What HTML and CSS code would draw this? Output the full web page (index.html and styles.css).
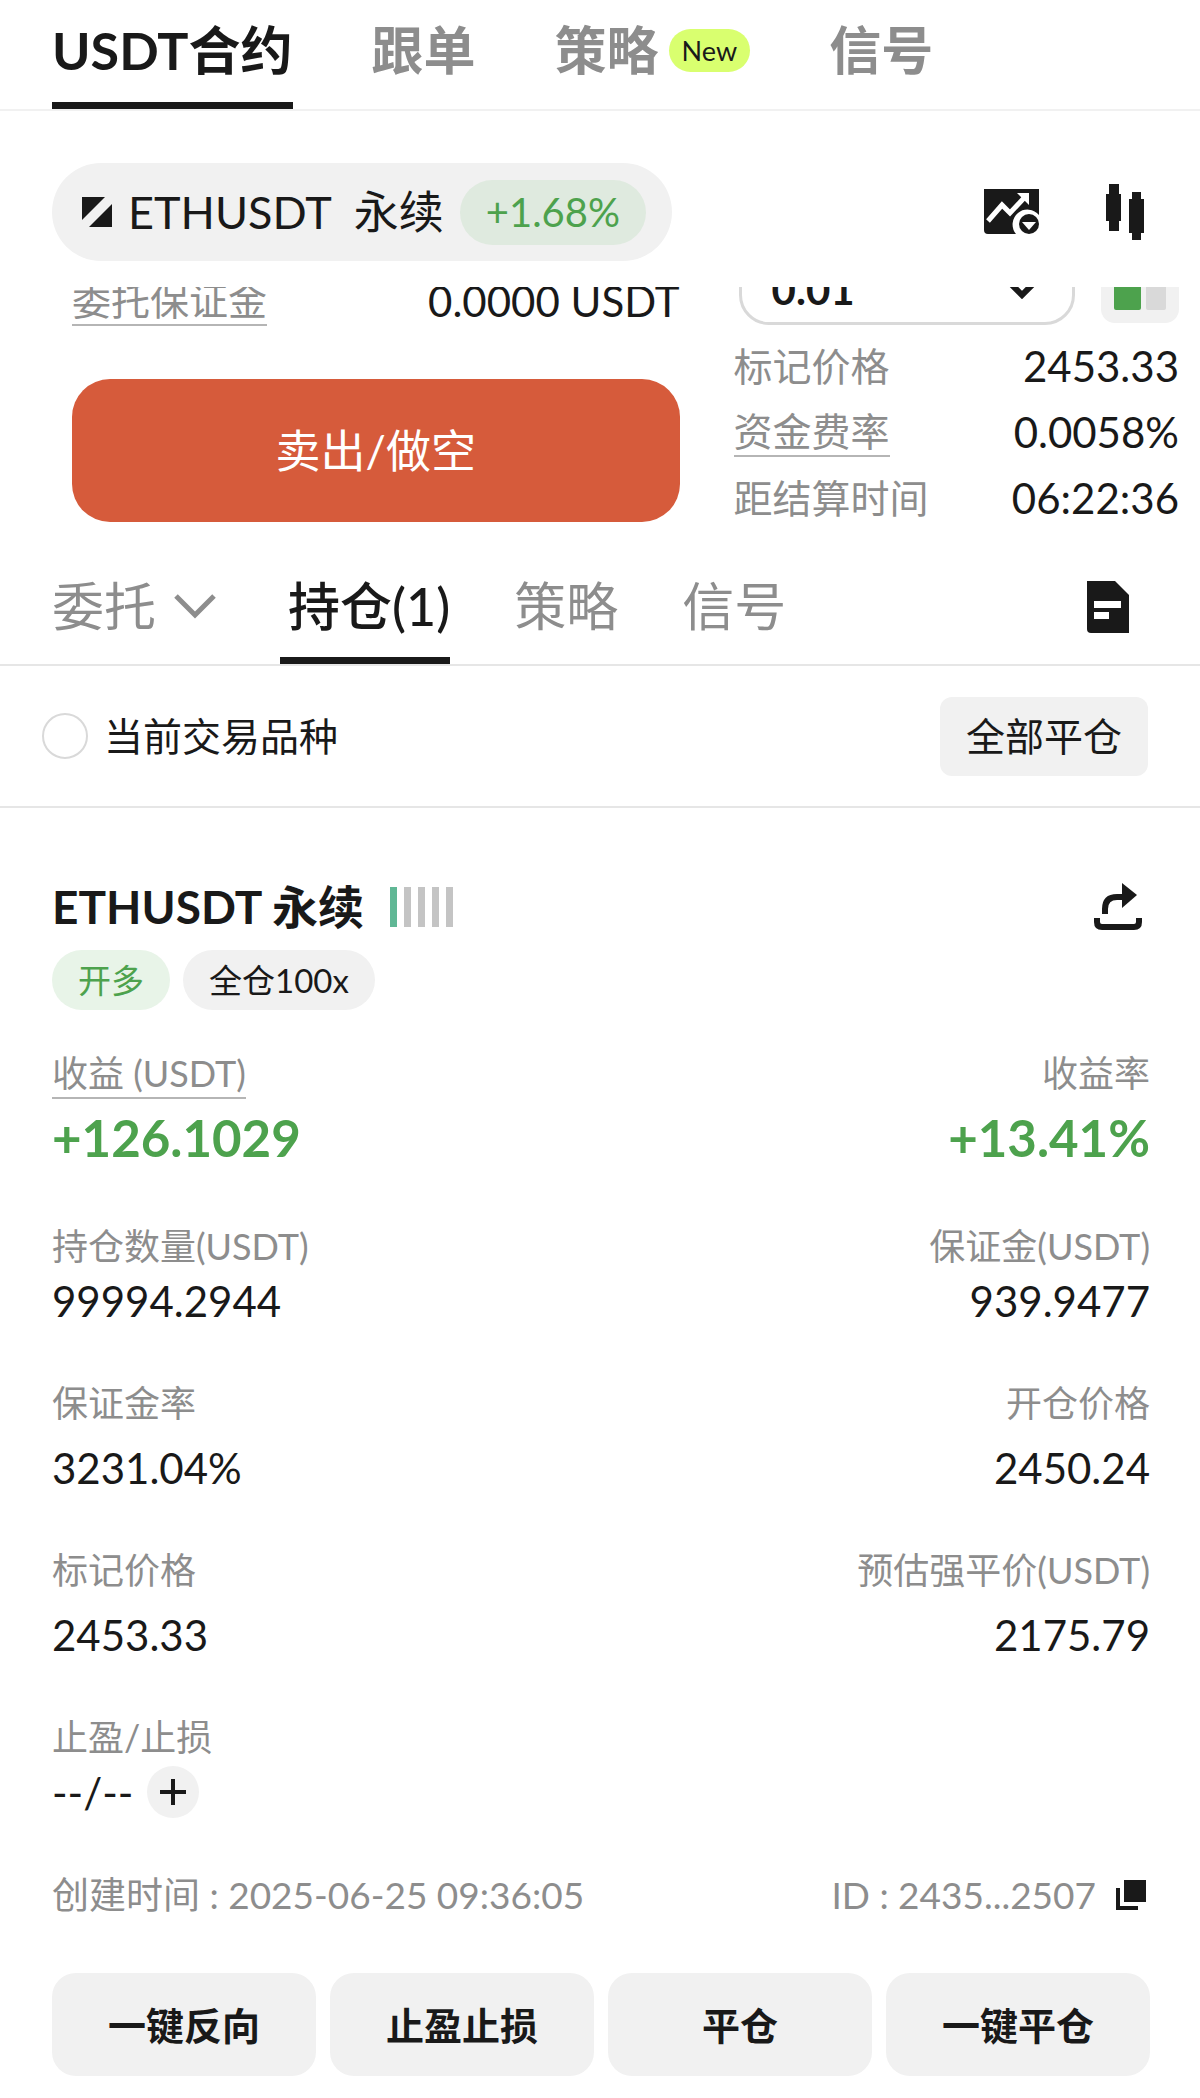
FILE: index.html
```html
<!DOCTYPE html>
<html lang="zh-CN">
<head>
    <meta charset="UTF-8">
    <meta name="viewport" content="width=device-width, initial-scale=1.0">
    <title>USDT合约</title>
    <link rel="stylesheet" href="styles.css">
</head>
<body>
    <nav class="top-tabs">
        <a href="#" class="active">USDT合约</a>
        <a href="#">跟单</a>
        <a href="#">策略<span class="new-tag">New</span></a>
        <a href="#">信号</a>
    </nav>

    <header class="symbol-bar">
        <button class="symbol">
            <svg width="30" height="30" viewBox="0 0 30 30"><path d="M0 0h23L0 23zM30 7v23H7z"/></svg>
            <span class="symbol-name">ETHUSDT</span>
            <span>永续</span>
            <span class="change">+1.68%</span>
        </button>
        <div class="tools">
            <button class="icon-button" aria-label="图表">
                <svg width="56" height="46" viewBox="0 0 56 46">
                    <path d="M0 0h55v26a14 14 0 0 0-23 19H4q-4 0-4-4z"/>
                    <path d="M4 32l14-16 8 8L40 9" fill="none" stroke="#fff" stroke-width="5"/>
                    <path d="M33 4h12v12z" fill="#fff"/>
                    <circle cx="45" cy="35" r="10"/>
                    <path d="M38 33h14l-7 8z" fill="#fff"/>
                </svg>
            </button>
            <button class="icon-button" aria-label="K线">
                <svg width="38" height="56" viewBox="0 0 38 56"><path d="M3 0h10v10h2v27h-2v10H3V37H0V10h3zM26 8h9v7h3v34h-3v7h-9v-7h-3V15h3z"/></svg>
            </button>
        </div>
    </header>

    <section class="trade">
        <div class="order">
            <div class="pair deposit">
                <span class="label hint">委托保证金</span>
                <span>0.0000 USDT</span>
            </div>
            <button class="sell">卖出/做空</button>
        </div>
        <div class="market">
            <div class="depth">
                <div class="select-box">
                    <select aria-label="深度"><option>0.01</option></select>
                    <svg width="28" height="26" viewBox="0 0 28 26"><path d="M2 10l12 12 12-12" fill="none" stroke="#191919" stroke-width="6"/></svg>
                </div>
                <button class="book-mode" aria-label="盘口"><i></i><i></i></button>
            </div>
            <div class="pair"><span class="label">标记价格</span><span>2453.33</span></div>
            <div class="pair"><span class="label hint">资金费率</span><span>0.0058%</span></div>
            <div class="pair"><span class="label">距结算时间</span><span>06:22:36</span></div>
        </div>
    </section>

    <nav class="position-tabs">
        <a href="#">委托
            <svg width="42" height="26" viewBox="0 0 42 26"><path d="M2 3l19 19L40 3" fill="none" stroke="#8d8d8d" stroke-width="5"/></svg>
        </a>
        <a href="#" class="active">持仓(1)</a>
        <a href="#">策略</a>
        <a href="#">信号</a>
        <button class="icon-button history" aria-label="历史">
            <svg width="42" height="52" viewBox="0 0 42 52">
                <path d="M0 0h28l14 14v38H4q-4 0-4-4z"/>
                <path d="M7 20h27v7H7zM7 31h15v7H7z" fill="#fff"/>
            </svg>
        </button>
    </nav>

    <div class="filter">
        <label><input type="checkbox">当前交易品种</label>
        <button>全部平仓</button>
    </div>

    <main class="position">
        <div class="position-head">
            <h2>ETHUSDT 永续</h2>
            <div class="risk"><i class="on"></i><i></i><i></i><i></i><i></i></div>
            <button class="icon-button share" aria-label="分享">
                <svg width="48" height="48" viewBox="0 0 48 48">
                    <path d="M11 31v-5q0-12 12-12h7M3 35v4q0 5 5 5h32q5 0 5-5v-4" fill="none" stroke="#191919" stroke-width="6"/>
                    <path d="M28 0l15 12-15 13z"/>
                </svg>
            </button>
        </div>
        <div class="badges">
            <span class="long">开多</span>
            <span>全仓100x</span>
        </div>

        <dl class="metrics">
            <div class="profit">
                <dt><span class="hint">收益 (USDT)</span></dt>
                <dd>+126.1029</dd>
            </div>
            <div class="profit">
                <dt>收益率</dt>
                <dd>+13.41%</dd>
            </div>
            <div class="tight">
                <dt>持仓数量(USDT)</dt>
                <dd>99994.2944</dd>
            </div>
            <div class="tight">
                <dt>保证金(USDT)</dt>
                <dd>939.9477</dd>
            </div>
            <div>
                <dt>保证金率</dt>
                <dd>3231.04%</dd>
            </div>
            <div>
                <dt>开仓价格</dt>
                <dd>2450.24</dd>
            </div>
            <div>
                <dt>标记价格</dt>
                <dd>2453.33</dd>
            </div>
            <div>
                <dt>预估强平价(USDT)</dt>
                <dd>2175.79</dd>
            </div>
            <div class="tight">
                <dt>止盈/止损</dt>
                <dd class="tpsl">--/--
                    <button aria-label="添加"><svg width="26" height="26" viewBox="0 0 26 26"><path d="M13 0v26M0 13h26" fill="none" stroke="#191919" stroke-width="4"/></svg></button>
                </dd>
            </div>
        </dl>

        <div class="meta">
            <span>创建时间 : 2025-06-25 09:36:05</span>
            <span class="order-id">ID : 2435...2507
                <button class="icon-button" aria-label="复制">
                    <svg width="30" height="30" viewBox="0 0 30 30"><path d="M8 0h22v22H8zM0 8h4v18h18v4H0z"/></svg>
                </button>
            </span>
        </div>

        <div class="actions">
            <button>一键反向</button>
            <button>止盈止损</button>
            <button>平仓</button>
            <button>一键平仓</button>
        </div>
    </main>
</body>
</html>
```

FILE: styles.css
```css
* {
    box-sizing: border-box;
}

body {
    margin: 0;
    background-color: #fff;
    color: #191919;
    font-family: Lato, 'Noto Sans CJK SC', sans-serif;
    font-size: 42px;
    line-height: 48px;
}

a {
    color: #8d8d8d;
    text-decoration: none;
}

button,
select {
    border: none;
    padding: 0;
    background: none;
    color: inherit;
    font: inherit;
    cursor: pointer;
}

svg {
    display: block;
    fill: #191919;
}

.icon-button {
    display: flex;
}

/* top navigation */
.top-tabs {
    display: flex;
    gap: 79px;
    height: 111px;
    padding: 0 52px;
    border-bottom: 2px solid #f1f1f1;
    font-size: 52px;
    font-weight: 700;
}

.top-tabs a {
    display: flex;
    align-items: center;
    gap: 10px;
    padding-bottom: 2px;
    border-bottom: 7px solid transparent;
}

.top-tabs .active,
.position-tabs .active {
    color: #191919;
    border-color: #191919;
}

.new-tag {
    padding: 0 13px;
    border-radius: 22px;
    background-color: #d9ff6f;
    color: #191919;
    font-size: 27px;
    font-weight: 400;
    line-height: 43px;
}

/* symbol bar */
.symbol-bar {
    display: flex;
    justify-content: space-between;
    align-items: center;
    padding: 52px 56px 26px 52px;
}

.symbol {
    display: flex;
    align-items: center;
    gap: 16px;
    height: 98px;
    padding: 0 26px 0 30px;
    border-radius: 49px;
    background-color: #f1f1f1;
    font-size: 45px;
}

.symbol-name {
    margin-right: 6px;
}

.change {
    padding: 0 26px;
    border-radius: 33px;
    background-color: #dfeadf;
    color: #4da24d;
    font-size: 40px;
    line-height: 65px;
}

.tools {
    display: flex;
    align-items: center;
    gap: 66px;
}

/* order form, scrolled under the symbol bar */
.trade {
    display: grid;
    grid-template-columns: 607fr 445fr;
    align-items: end;
    gap: 54px;
    overflow: hidden;
    padding: 0 21px 0 72px;
}

.order,
.market {
    margin-top: -40px;
}

.order {
    padding-bottom: 9px;
}

.pair {
    display: flex;
    justify-content: space-between;
    align-items: center;
    height: 66px;
}

.label {
    color: #8d8d8d;
    font-size: 39px;
}

.hint {
    display: inline-block;
    border-bottom: 2px solid #b5b5b5;
}

.deposit {
    margin-bottom: 45px;
}

.sell {
    width: 100%;
    height: 143px;
    border-radius: 38px;
    background-color: #d65b3b;
    color: #fff;
    font-size: 45px;
}

.depth {
    display: flex;
    align-items: center;
    gap: 26px;
    margin-bottom: 8px;
}

.select-box {
    display: flex;
    align-items: center;
    flex: 1;
    margin-left: 5px;
    padding-right: 36px;
    height: 78px;
    border: 3px solid #d9d9d9;
    border-radius: 30px;
}

.select-box select {
    flex: 1;
    height: 72px;
    padding-top: 6px;
    padding-left: 30px;
    appearance: none;
    font-size: 42px;
    font-weight: 700;
}

.book-mode {
    display: flex;
    align-items: center;
    gap: 5px;
    width: 78px;
    height: 74px;
    padding: 0 13px;
    border-radius: 14px;
    background-color: #f1f1f1;
}

.book-mode i {
    width: 20px;
    height: 48px;
    border-radius: 2px;
    background-color: #d9d9d9;
}

.book-mode i:first-child {
    width: 27px;
    background-color: #4da24d;
}

/* position tabs */
.position-tabs {
    display: flex;
    align-items: stretch;
    gap: 64px;
    height: 135px;
    padding: 0 71px 0 52px;
    border-bottom: 2px solid #e6e6e6;
    font-size: 52px;
}

.position-tabs a {
    display: flex;
    align-items: center;
    gap: 18px;
    padding-top: 24px;
    border-bottom: 7px solid transparent;
}

.position-tabs .active {
    padding-left: 8px;
    font-weight: 500;
}

.history {
    align-items: center;
    margin-left: auto;
    padding-top: 18px;
}

.filter {
    display: flex;
    justify-content: space-between;
    align-items: center;
    height: 142px;
    padding: 0 52px 0 42px;
    border-bottom: 2px solid #e6e6e6;
    font-size: 39px;
}

.filter label {
    display: flex;
    align-items: center;
    gap: 16px;
}

.filter input {
    width: 46px;
    height: 46px;
    margin: 0;
    border: 2px solid #d9d9d9;
    border-radius: 50%;
    appearance: none;
}

.filter button {
    height: 79px;
    padding: 0 26px;
    border-radius: 12px;
    background-color: #f1f1f1;
}

/* position card */
.position {
    padding: 74px 50px 20px 52px;
}

.position-head {
    display: flex;
    align-items: center;
    gap: 26px;
    height: 50px;
}

.position-head h2 {
    margin: 0;
    font-size: 46px;
    font-weight: 700;
}

.risk {
    display: flex;
    gap: 7px;
}

.risk i {
    width: 7px;
    height: 40px;
    background-color: #c4c4c4;
}

.risk .on {
    background-color: #60b795;
}

.share {
    margin-left: auto;
    margin-right: 8px;
}

.badges {
    display: flex;
    gap: 13px;
    margin: 18px 0 39px;
}

.badges span {
    padding: 0 26px;
    border-radius: 30px;
    background-color: #f1f1f1;
    font-size: 33px;
    line-height: 60px;
}

.badges .long {
    background-color: #e8f4e8;
    color: #4da24d;
}

.metrics {
    display: grid;
    grid-template-columns: 1fr 1fr;
    row-gap: 54px;
    margin: 0 0 55px;
}

.metrics div:nth-child(even) {
    text-align: right;
}

.metrics dt {
    color: #8d8d8d;
    font-size: 36px;
}

.metrics dd {
    margin: 17px 0 0;
}

.metrics .tight dd {
    margin-top: 7px;
}

.metrics .profit dt {
    height: 50px;
}

.metrics .profit dd {
    margin-top: 9px;
    color: #4da24d;
    font-size: 51px;
    font-weight: 700;
    line-height: 60px;
}

.tpsl {
    display: flex;
    align-items: center;
    gap: 14px;
    height: 48px;
}

.tpsl button {
    display: flex;
    justify-content: center;
    align-items: center;
    width: 52px;
    height: 52px;
    border-radius: 50%;
    background-color: #f1f1f1;
}

.meta {
    display: flex;
    justify-content: space-between;
    margin-bottom: 54px;
    color: #8d8d8d;
    font-size: 37px;
}

.order-id {
    display: flex;
    align-items: center;
    gap: 20px;
    padding-right: 4px;
}

.actions {
    display: grid;
    grid-template-columns: repeat(4, 1fr);
    gap: 14px;
}

.actions button {
    height: 103px;
    border-radius: 24px;
    background-color: #f1f1f1;
    font-size: 38px;
    font-weight: 700;
}
```
